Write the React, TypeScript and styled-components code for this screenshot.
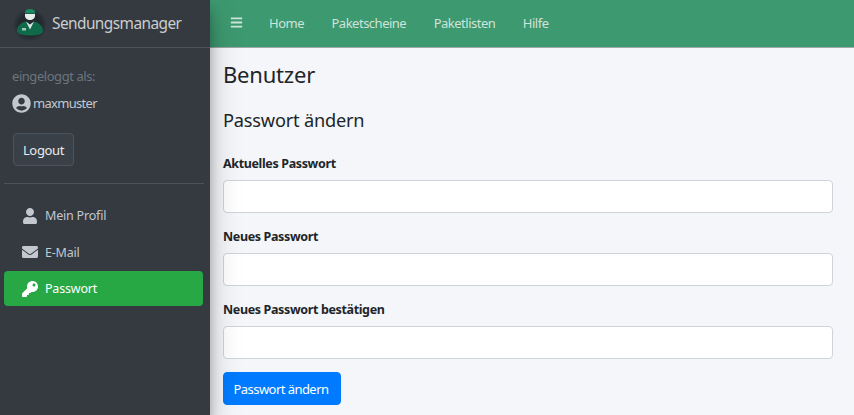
import styled, { createGlobalStyle } from 'styled-components'
import { FaBars, FaEnvelope, FaKey, FaUser, FaUserCircle } from 'react-icons/fa'

import type { FC, ReactNode } from 'react'

const GlobalStyle = createGlobalStyle`
  html, body {
    margin: 0;
    height: 415px;
    overflow: hidden;
    background: #f4f6f9;
    font-family: "Noto Sans", "Open Sans", sans-serif;
  }
  * {
    box-sizing: border-box;
  }
`

const Page = styled.div`
  display: flex;
  width: 854px;
  height: 415px;
  overflow: hidden;
`

const Sidebar = styled.aside`
  position: relative;
  z-index: 2;
  width: 210px;
  flex: none;
  background: #343a40;
  box-shadow: 0 14px 28px rgba(0, 0, 0, 0.25), 0 10px 10px rgba(0, 0, 0, 0.22);
`

const Brand = styled.div`
  display: flex;
  align-items: center;
  height: 48px;
  padding-left: 13px;
  gap: 5px;
  border-bottom: 1px solid #4b545c;
  color: rgba(255, 255, 255, 0.75);
  font-size: 15.4px;
  letter-spacing: -0.55px;
`

const UserPanel = styled.div`
  padding: 19px 12px 0 13px;
`

const LoginHint = styled.div`
  margin-left: -1px;
  color: #6c757d;
  font-size: 13px;
  line-height: 18px;
  letter-spacing: -0.45px;
`

const UserName = styled.div`
  display: flex;
  align-items: center;
  gap: 2px;
  margin: 8px 0 0 -1px;
  height: 20px;
  color: #c2c7d0;
  font-size: 13px;
  letter-spacing: -0.7px;

  svg {
    font-size: 19px;
  }
`

const LogoutButton = styled.button`
  display: block;
  width: 61px;
  height: 33px;
  margin-top: 20px;
  padding: 0;
  background: #3a4047;
  border: 1px solid #4b545c;
  border-radius: 4px;
  color: #e9ecef;
  font: inherit;
  font-size: 13px;
  letter-spacing: -0.35px;
`

const Divider = styled.hr`
  margin: 17px 6px 14px 4px;
  border: 0;
  border-top: 1px solid #4b545c;
`

const Nav = styled.nav`
  display: flex;
  flex-direction: column;
  gap: 1.5px;
  padding: 0 7px 0 4px;
`

const NavItem = styled.div<{ $active?: boolean }>`
  display: flex;
  align-items: center;
  height: 35px;
  padding-left: 17px;
  gap: 7px;
  border-radius: 4px;
  background: ${(p) => (p.$active ? '#28a745' : 'transparent')};
  color: ${(p) => (p.$active ? '#ffffff' : '#c2c7d0')};
  font-size: 12.5px;
  letter-spacing: -0.2px;
`

const NavIcon = styled.span`
  display: flex;
  justify-content: center;
  width: 17px;
  font-size: 16px;
`

const Body = styled.div`
  flex: 1;
  min-width: 0;
`

const TopBar = styled.header`
  display: flex;
  align-items: center;
  height: 48px;
  padding: 0 0 2px 20px;
  background: #3d9970;
  border-bottom: 1px solid #9fa8a3;
  color: rgba(255, 255, 255, 0.75);
  font-size: 13px;
  letter-spacing: -0.5px;
`

const MenuIcon = styled.span`
  display: flex;
  font-size: 13px;
  margin-right: 26px;
`

const TopLinks = styled.div`
  display: flex;
  gap: 27.5px;
`

const Content = styled.main`
  padding: 11px 21px 0 13px;
`

const Title = styled.h1`
  margin: 0;
  color: #212529;
  font-size: 22px;
  font-weight: 400;
  line-height: 30px;
  letter-spacing: -0.2px;
`

const SubTitle = styled.h2`
  margin: 19px 0 23px;
  color: #212529;
  font-size: 18.2px;
  font-weight: 400;
  line-height: 24px;
  letter-spacing: -0.2px;
`

const Field = styled.div`
  margin-bottom: 15px;

  &:last-of-type {
    margin-bottom: 13px;
  }
`

const Label = styled.label`
  display: block;
  margin-bottom: 7px;
  color: #212529;
  font-size: 12.5px;
  font-weight: 700;
  line-height: 18px;
  letter-spacing: -0.36px;
`

const Input = styled.input`
  display: block;
  width: 100%;
  height: 33px;
  background: #ffffff;
  border: 1px solid #ced4da;
  border-radius: 4px;
`

const SubmitButton = styled.button`
  display: block;
  width: 118px;
  height: 33px;
  padding: 0 2px 0 0;
  background: #007bff;
  border: 1px solid #007bff;
  border-radius: 4px;
  color: #ffffff;
  font: inherit;
  font-size: 13px;
  letter-spacing: -0.55px;
`

const Logo = () => (
  <svg width="34" height="34" viewBox="0 0 34 34">
    <defs>
      <radialGradient id="logoShade" cx="50%" cy="50%" r="50%">
        <stop offset="65%" stopColor="#22282d" />
        <stop offset="100%" stopColor="#343a40" />
      </radialGradient>
    </defs>
    <circle cx="17" cy="18" r="17" fill="url(#logoShade)" />
    <path d="M4 24c0-5 4-8.500 9-9.500l4 4 4-4c5 1 9 4.500 9 9.500 0 3-6 4.500-13 4.500S4 27 4 24z" fill="#0f6a4a" />
    <path d="M13 14.500l4 8 4-8-4 3z" fill="#d6e6de" />
    <path d="M12 5c0-2 2.200-3 5-3s5 1 5 3v1.500H12z" fill="#1b8a60" />
    <path d="M12 7h10v1.500c0 2.800-2.200 4.500-5 4.500s-5-1.700-5-4.500z" fill="#e4efe9" />
    <rect x="9" y="21" width="4" height="2.500" fill="#9fc9b6" />
  </svg>
)

const links = ['Home', 'Paketscheine', 'Paketlisten', 'Hilfe']

const navItems: { label: string; icon: ReactNode; active?: boolean }[] = [
  { label: 'Mein Profil', icon: <FaUser /> },
  { label: 'E-Mail', icon: <FaEnvelope /> },
  { label: 'Passwort', icon: <FaKey />, active: true },
]

const fields = ['Aktuelles Passwort', 'Neues Passwort', 'Neues Passwort bestätigen']

const App: FC = () => {
  return (
    <Page>
      <GlobalStyle />
      <Sidebar>
        <Brand>
          <Logo />
          Sendungsmanager
        </Brand>
        <UserPanel>
          <LoginHint>eingeloggt als:</LoginHint>
          <UserName>
            <FaUserCircle />
            maxmuster
          </UserName>
          <LogoutButton>Logout</LogoutButton>
        </UserPanel>
        <Divider />
        <Nav>
          {navItems.map((item) => (
            <NavItem key={item.label} $active={item.active}>
              <NavIcon>{item.icon}</NavIcon>
              {item.label}
            </NavItem>
          ))}
        </Nav>
      </Sidebar>
      <Body>
        <TopBar>
          <MenuIcon>
            <FaBars />
          </MenuIcon>
          <TopLinks>
            {links.map((link) => (
              <span key={link}>{link}</span>
            ))}
          </TopLinks>
        </TopBar>
        <Content>
          <Title>Benutzer</Title>
          <SubTitle>Passwort ändern</SubTitle>
          {fields.map((field) => (
            <Field key={field}>
              <Label>{field}</Label>
              <Input type="password" />
            </Field>
          ))}
          <SubmitButton>Passwort ändern</SubmitButton>
        </Content>
      </Body>
    </Page>
  )
}

export default App
